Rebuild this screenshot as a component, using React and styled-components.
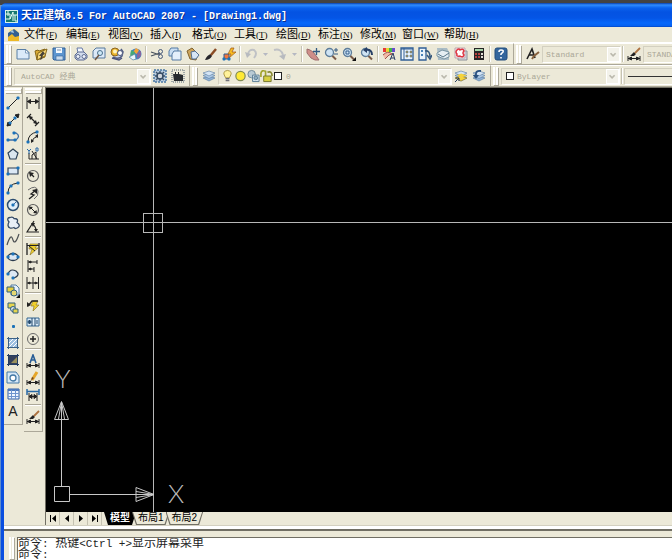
import React, { useState } from 'react'
import styled, { createGlobalStyle } from 'styled-components'

const GlobalStyle = createGlobalStyle`
* {
  box-sizing: border-box;
}

body {
  background: #434343;
  margin: 0;
}

button, input, select {
  background: none;
  border: none;
  border-radius: 0;
  color: inherit;
  font: inherit;
  margin: 0;
  outline: none;
  padding: 0;
}
`

const Desktop = styled.div`
background: linear-gradient(#434343 0 5px, #6d97c8 5px 30px, #5f8ccc 30px);
display: flex;
font-family: 'Liberation Mono', 'Noto Sans CJK SC', monospace;
height: 100vh;
overflow: hidden;
padding: 3px 0 0 1px;
`

const Window = styled.div`
background: #ece9d8;
border-left: 3px solid #0a4fe0;
border-top-left-radius: 6px;
display: flex;
flex: 1;
flex-direction: column;
min-width: 0;
`

const TitleBar = styled.header`
align-items: center;
background: linear-gradient(#0a3fa8, #2f8cff 2px, #0a62ee 5px, #0453e2 9px, #0455e6 15px, #0768fb 20px, #0560f0 23px, #0340b8);
border-top-left-radius: 5px;
color: #ffffff;
display: flex;
flex: none;
font-size: 11px;
font-weight: 700;
gap: 3px;
height: 24px;
line-height: 24px;
margin-left: -3px;
padding: 2px 0 0 4px;
text-shadow: 1px 1px #0b2f8c;

& > h1 {
  font-size: 11px;
  margin: 0;
  white-space: pre;
}
`

const Latin = styled.span`
font-size: ${props => props.$size}px;
`

const MenuBar = styled.nav`
align-items: center;
border-bottom: 1px solid #ffffff;
display: flex;
flex: none;
height: 16px;
padding-left: 3px;

& > svg {
  flex: none;
  margin-right: 3px;
}
`

const MenuItem = styled.button`
flex: none;
font-family: 'Liberation Serif', 'Noto Sans CJK SC', serif;
font-size: 11px;
line-height: 14px;
text-align: left;
white-space: nowrap;
width: 42px;

& > span {
  font-size: 9px;
}
`

const ToolRow = styled.div`
display: flex;
flex: none;
height: 22px;
overflow: hidden;
`

const ToolBar = styled.div`
align-items: center;
border-bottom: 1px solid #aca899;
border-right: 1px solid #aca899;
border-top: 1px solid #ffffff;
display: flex;
flex: ${props => props.$grow ? '1 0 auto' : 'none'};
padding: 0 ${props => props.$end || 2}px 0 2px;
`

const Grip = styled.span`
border: solid #ffffff;
box-shadow: 1px 1px #aca899;
flex: none;
${props => props.$flat ? `
border-width: 2px 0;
height: 5px;
margin: 0 1px 1px;
` : `
border-width: 0 2px;
height: 18px;
margin: 0 3px 0 0;
width: 5px;
`}
`

const ToolButton = styled.button`
align-items: center;
display: flex;
flex: none;
height: ${props => props.$tall ? 17 : 20}px;
justify-content: center;
width: 18px;
`

const FlyoutButton = styled(ToolButton)`
width: 11px;
`

const LayerButton = styled(ToolButton)`
width: 13px;
`

const LetterButton = styled(ToolButton)`
color: #222222;
font-family: 'Liberation Sans', sans-serif;
font-size: 14px;
`

const Divider = styled.span`
align-self: stretch;
flex: none;
${props => props.$flat ? `
border-top: 1px solid #aca899;
box-shadow: inset 0 1px #ffffff;
height: 3px;
margin: 1px 1px;
` : `
border-left: 1px solid #c5c2b2;
box-shadow: inset 1px 0 #ffffff;
margin: 2px 1px;
width: 2px;
`}
`

const Combo = styled.div`
align-items: center;
border: 1px solid;
border-color: #d3d0c0 #ffffff #ffffff #d3d0c0;
color: #aaa797;
display: flex;
flex: none;
font-size: 8px;
height: 17px;
padding-left: ${props => props.$pad || 3}px;
width: ${props => props.$width}px;

& > select {
  appearance: none;
  flex: 1;
  height: 15px;
  line-height: 15px;
  min-width: 0;
}

& > svg {
  background: #f3f2ea;
  border: 1px solid #ffffff;
  flex: none;
}
`

const Swatch = styled.span`
background: #ffffff;
border: 1px solid #222222;
flex: none;
height: 8px;
margin: 0 ${props => props.$gap}px 0 1px;
width: 8px;
`

const LinePreview = styled.span`
border-top: 1px solid #333333;
flex: 1;
`

const Work = styled.main`
display: flex;
flex: 1;
min-height: 0;
`

const SideBar = styled.div`
align-self: flex-start;
border-bottom: 1px solid #aca899;
border-right: 1px solid #aca899;
display: flex;
flex: none;
flex-direction: column;
margin-right: 1px;
padding: 1px 0 ${props => props.$end}px;
width: 19px;

& > div {
  align-items: center;
  display: flex;
  flex-direction: column;
  justify-content: space-between;
  min-height: ${props => props.$length || 0}px;
}
`

const Drawing = styled.section`
border-left: 1px solid #716f64;
border-top: 1px solid #716f64;
display: flex;
flex: 1;
flex-direction: column;
margin-left: 1px;
min-width: 0;
`

const Canvas = styled.div`
background: #000000;
flex: 1;
min-height: 0;
overflow: hidden;
position: relative;

& > svg {
  left: 0;
  position: absolute;
}
`

const CrossHair = styled.svg`
height: 100%;
top: 0;
width: 100%;
`

const UcsIcon = styled.svg`
bottom: 0;
font-family: Lato, sans-serif;
font-size: 26px;
font-weight: 300;
`

const TabRow = styled.div`
align-items: stretch;
display: flex;
flex: none;
height: 13px;
`

const NavButton = styled.button`
align-items: center;
border-right: 1px solid #c5c2b2;
display: flex;
justify-content: center;
width: 14px;
`

const Tabs = styled.div`
display: flex;
padding-left: 2px;
`

const Tab = styled.button`
background: ${props => props.$active ? '#000000' : '#716f64'};
clip-path: polygon(0 0, 100% 0, calc(100% - 4px) 100%, 4px 100%);
color: ${props => props.$active ? '#ffffff' : '#000000'};
font-size: 10px;
font-weight: ${props => props.$active ? 700 : 400};
line-height: 12px;
margin-right: -4px;
padding: 0 1px 1px;

& > span {
  background: ${props => props.$active ? '#000000' : '#ece9d8'};
  clip-path: polygon(0 0, 100% 0, calc(100% - 4px) 100%, 4px 100%);
  display: block;
  font-family: 'Liberation Sans', 'Noto Sans CJK SC', sans-serif;
  height: 12px;
  padding: 0 5px;
  white-space: nowrap;
}
`

const CommandArea = styled.footer`
border-top: 2px solid #716f64;
box-shadow: 0 -3px #ffffff, 0 -4px #d3d0c0;
display: flex;
flex: none;
margin-top: 4px;
padding: 6px 0 0 5px;

& > span {
  height: 22px;
  margin-right: 3px;
}
`

const CommandLog = styled.div`
background: #ffffff;
border-left: 1px solid #716f64;
border-top: 1px solid #716f64;
color: #222222;
flex: 1;
font-size: 12px;
line-height: 11px;
overflow: hidden;
padding-top: 1px;
white-space: pre;

& > p {
  height: 11px;
  margin: 0;
}

& > label {
  display: flex;
  height: 10px;
}

& input {
  flex: 1;
  height: 10px;
}
`

const blue = '#3c6ea5'
const ink = '#222222'

const layers = (
  <>
    <path d="M1 9l6-2 6 2-6 3z" fill="#8fb2d6" stroke="#55799f" strokeWidth=".6" />
    <path d="M1 6.500l6-2 6 2-6 3z" fill="#b2cde8" stroke="#55799f" strokeWidth=".6" />
    <path d="M1 4l6-2 6 2-6 3z" fill="#d3e4f5" stroke="#55799f" strokeWidth=".6" />
  </>
)

const magnifier = (
  <>
    <path d="M8 8.500l4 4" stroke="#7a5c49" strokeWidth="2" />
    <circle cx="5.500" cy="5.500" r="4" fill="#cfe4f4" stroke="#5d7d9a" strokeWidth="1.300" />
  </>
)

const dimLine = <path d="M1 9v5M13 9v5M1 11.500h12M1.500 11.500l3-1.500v3zM12.500 11.500l-3-1.500v3z" fill={ink} stroke={ink} />

const dots = points => points.map(([x, y]) => (
  <rect key={`${x}-${y}`} x={x - 1.5} y={y - 1.5} width="3" height="3" rx="1" fill="#1c72b8" />
))

const drawings = {
  // standard
  new: <><path d="M1 2.500h9l3 3V12H1z" fill="#dbeaf9" stroke="#587ea6" /><path d="M9.500 2.500v3.500H13z" fill="#ffffff" stroke="#587ea6" strokeWidth=".7" /></>,
  open: <><path d="M1 4l3-1 1 1 6-2v8l-8 3z" fill="#d9ab35" stroke="#856719" /><path d="M4 6l9-4-2 7-8 4z" fill="#f8d978" stroke="#856719" /><path d="M6 13l1-4-2 0 4-5 2 3-2 1-1 4z" fill="#46423b" /></>,
  save: <><path d="M1 1h12v12H2l-1-1z" fill="#5d96d0" stroke="#315f96" /><path d="M4 1h6v5H4z" fill="#f3f8fd" /><path d="M4 9h7v4H4z" fill="#c8dbed" stroke="#315f96" strokeWidth=".6" /><path d="M5 3h4" stroke="#7b91aa" /></>,
  print: <><path d="M3 1h5l2 5H4z" fill="#f4f8fe" stroke="#6779a6" /><path d="M1 8l3-3h6l3 3v3l-3 2H3l-2-2z" fill="#d2dced" stroke="#5d6b91" /><circle cx="4" cy="9.500" r="2" fill="#eef2fa" stroke="#5d6b91" /><circle cx="10" cy="9.500" r="2" fill="#eef2fa" stroke="#5d6b91" /></>,
  preview: <><path d="M1 4l3-3h9v10H1z" fill="#dce9f7" stroke="#57789c" /><circle cx="8" cy="6" r="2.500" fill="#cde8f7" stroke="#4c718d" /><path d="M7 8l-4 5" stroke="#6e5643" strokeWidth="1.500" /></>,
  publish: <><path d="M3 10q6 3 9-1l1-4-2-3" fill="#cbd4e8" stroke="#505c83" strokeWidth="1.500" /><circle cx="5" cy="5" r="4" fill="#e9b42b" stroke="#8c6420" /><circle cx="5" cy="4.500" r="2" fill="#fff3bf" /><circle cx="10" cy="6" r="2.500" fill="#ffffff" stroke="#515b80" /><path d="M2 11l7 2 3-2" fill="none" stroke="#49527c" strokeWidth="1.500" /></>,
  web: <><circle cx="8" cy="7" r="5.500" fill="#3f83c6" /><path d="M8 1l3 2-2 4-4-2z" fill="#f5a338" /><path d="M3 3l4 2-1 5-4 1z" fill="#47a978" /><path d="M9 6l4-2v5l-4 3z" fill="#85659e" /><path d="M1 10l6-3 1 5-3 1z" fill="#eaf6fc" stroke="#56829f" strokeWidth=".7" /></>,
  cut: <><path d="M1 5l9 3M1 9l9-3" stroke="#46505c" strokeWidth="1.300" /><circle cx="10.500" cy="4.500" r="2" fill="none" stroke="#46587a" /><circle cx="10.500" cy="9.500" r="2" fill="none" stroke="#46587a" /></>,
  copy: <><path d="M1 4l2-3h7v8H1z" fill="#cbdff2" stroke="#557ba4" /><path d="M4 7l2-3h7v9H4z" fill="#e5f0fb" stroke="#557ba4" /></>,
  paste: <><path d="M1 4l5-3 6 6-2 6-6-1z" fill="#cda45a" stroke="#82632e" /><path d="M5 5l4-1 4 4-3 4H6z" fill="#d7e6f5" stroke="#526f91" /></>,
  brush: <><path d="M1 13q2-5 6-6l1 2q-2 4-7 4z" fill="#26252a" /><path d="M7 8l5-6" stroke="#8b4c25" strokeWidth="2.500" /></>,
  block: <><path d="M2 7h5v5H2z" fill="#f3763b" stroke="#315b8e" /><path d="M6 7l3-6h3l-2 4h4L7 11l2-4z" fill="#f8bc21" stroke="#9d5515" strokeWidth=".7" />{dots([[2, 12], [7, 12]])}</>,
  undo: <><path d="M4 7q1-5 6-4 4 3 0 8" fill="none" stroke="#bfc1c5" strokeWidth="2" /><path d="M1 5l2 6 4-4z" fill="#b7babf" /></>,
  redo: <><path d="M1 3q7-2 9 5" fill="none" stroke="#bfc1c5" strokeWidth="2" /><path d="M13 7l-2 6-5-4z" fill="#b7babf" /></>,
  pan: <><path d="M1 2l3 1 3 2 4 5 2 3H9L5 11 1 6z" fill="#cf8e89" stroke="#9d6d6d" /><path d="M10.500 1v7M7 4.500h7" stroke="#345b82" strokeWidth="1.300" /></>,
  zoomRealtime: <>{magnifier}<path d="M10 3h4M12 1v4M10 7h4" stroke="#345b82" /></>,
  zoomWindow: <>{magnifier}<path d="M4 4h3v3H4z" fill="none" stroke="#355f8c" /><path d="M14 10v4h-4z" fill="#111111" /></>,
  zoomPrevious: <>{magnifier}<path d="M12 8q0-6-6-5" fill="none" stroke="#263f66" strokeWidth="2" /><path d="M7 0v6L3 3z" fill="#263f66" /></>,
  properties: <><path d="M1 1h3v4H1z" fill="#e83838" /><path d="M4 1h3v4H4z" fill="#e9d735" /><path d="M7 1h3v4H7z" fill="#40b549" /><path d="M10 1h3v4h-3z" fill="#684bcc" /><path d="M1 8q5-5 9-1l-3 1-4 4" fill="#f0b9a5" stroke="#9c564d" /><path d="M8 13l3-7 2 7M9 11h3" fill="none" stroke="#263a61" /></>,
  designCenter: <><path d="M1 1h12v12H1z" fill="#eef5fb" stroke="#315f96" strokeWidth="1.300" /><path d="M4 1v12M1 2h12" stroke="#315f96" /><path d="M6 4h2v2H6zM10 4h2v2h-2zM6 8h2v2H6zM10 8h2v2h-2z" fill="#ca9e3c" stroke="#47719b" strokeWidth=".6" /></>,
  palettes: <><path d="M1 1h7v12H1z" fill="#eaf3fb" stroke="#315f96" strokeWidth="1.300" /><path d="M3 3h2v2H3zM3 7h2v2H3z" fill="#4882b8" /><path d="M7 4q5-1 5 6M9 8l3 4 2-4" fill="none" stroke="#375a7e" strokeWidth="1.500" /></>,
  sheets: <><path d="M1 1h10l2 4v8H2z" fill="#aabcc5" /><path d="M1 6l5-3 7 2v5l-5 2-7-3z" fill="#e5eef2" stroke="#7894a2" /><path d="M2 7l5 3 6-4" fill="none" stroke="#587789" /></>,
  markup: <><path d="M4 4h9v9H4z" fill="#d5dbe2" stroke="#8a8f97" /><path d="M1 1h10v10H1z" fill="#f6ebed" stroke="#bda6af" /><path d="M3 3q2-2 3 0 3-2 4 1-2 2 0 4-1 3-4 1-4 1-3-2-2-2 0-4z" fill="#ffffff" stroke="#df3542" strokeWidth="1.500" /></>,
  calculator: <><path d="M2 1h10v12H2z" fill="#262626" /><path d="M3 2h8v2H3z" fill="#a9d5aa" /><path d="M3 6h2v2H3zM6 6h2v2H6zM3 9h2v2H3zM6 9h2v2H6z" fill="#b7423f" /><path d="M9 6h2v2H9zM9 9h2v2H9z" fill="#e2dfd8" /></>,
  help: <><rect x="1" y="1" width="12" height="12" rx="2" fill="#34669d" stroke="#234d7c" /><path d="M5 5q0-2 2-2 3 0 2 2L7 7v1M7 10v1.500" fill="none" stroke="#ffffff" strokeWidth="1.600" /></>,
  textStyle: <><path d="M1 12L6 2l3 9M3 8h5" fill="none" stroke={ink} strokeWidth="1.600" /><path d="M6 12l2-3 5-4" fill="none" stroke="#88623f" strokeWidth="2" /></>,
  dimStyle: <>{dimLine}<path d="M3 9l4-4 2 2-2 2z" fill={ink} /><path d="M8 6l5-5" stroke="#ad7240" strokeWidth="1.800" /></>,
  gear: <><path d="M1 1h12v12H1z" fill="#b9cde0" stroke="#4a77a3" strokeWidth="1.500" strokeDasharray="2 1" /><circle cx="7" cy="7" r="3" fill="#d1d6dc" stroke="#374d65" strokeWidth="1.500" /><path d="M7 2v3M7 9v3M2 7h3M9 7h3M3 3l2 2M11 3L9 5M3 11l2-2M11 11L9 9" stroke="#374d65" strokeWidth="1.300" /></>,
  workspace: <><path d="M1 1h12v12H1z" fill="none" stroke="#526474" strokeDasharray="1 1" /><path d="M2 5h2V3h1v2h2V3h1v2l4 1v6H3z" fill="#26292d" /></>,
  layers,
  bulb: <><path d="M7 1q-6 1-3 6l1 2h4l1-2Q13 2 7 1z" fill="#fff29a" stroke="#a99440" /><path d="M5 10h4M5 12h4" stroke="#6f7079" strokeWidth="1.500" /></>,
  sun: <circle cx="7" cy="7" r="5" fill="#ffea35" stroke="#808b55" strokeWidth="1.300" />,
  freeze: <><circle cx="5" cy="5" r="4" fill="#b9cad4" stroke="#6e8797" /><path d="M6 6h7v7H6z" fill="#d5e4ed" stroke="#587b93" /><circle cx="9.500" cy="9" r="2" fill="#91adbf" stroke="#587b93" /></>,
  lock: <><path d="M1 8V4q1-4 5-2v5" fill="none" stroke="#a2a42f" strokeWidth="1.800" /><path d="M4 7h8v6H4z" fill="#d6cf40" stroke="#74752a" /><path d="M8 3q5-2 5 4" fill="none" stroke="#858731" strokeWidth="1.800" /></>,
  layerCurrent: <>{layers}<path d="M1 9l6-2 6 2-6 3z" fill="#f5d33c" stroke="#977b2a" strokeWidth=".6" /><path d="M3 6.500l4-2 6 2-6 2z" fill="#f5d33c" /><path d="M1 13l4-4M2 9h3v3" fill="none" stroke="#263d60" /></>,
  layerPrevious: <>{layers}<path d="M4 7q-1-6 5-5" fill="none" stroke="#2b527f" strokeWidth="1.800" /><path d="M1 6h6l-3 4z" fill="#2b527f" /></>,

  // draw
  line: <><path d="M2 12L12 2" stroke={ink} />{dots([[2, 12], [12, 2]])}</>,
  xline: <><path d="M1 13L13 1M13 1l-1 4-3-3zM1 13l1-4 3 3z" fill={ink} stroke={ink} />{dots([[4, 10], [9, 5]])}</>,
  pline: <><path d="M2 10h8q5-4 0-7H7" fill="none" stroke={blue} strokeWidth="1.300" />{dots([[2, 10], [9, 10], [8, 3]])}</>,
  polygon: <path d="M7 2l5 4-2 6H4L2 6z" fill="#dae6ef" stroke="#2c4258" strokeWidth="1.200" />,
  rectangle: <><path d="M2 4h10v6H2z" fill="#dce8f5" stroke="#2d3f55" strokeWidth="1.200" />{dots([[2, 10], [12, 4]])}</>,
  arc: <><path d="M2 12Q2 3 12 2" fill="none" stroke={ink} />{dots([[2, 12], [5, 5], [12, 2]])}</>,
  circle: <><circle cx="7" cy="7" r="5.500" fill="#e1eef9" stroke="#2b4c6f" strokeWidth="1.500" /><path d="M7 7l3-3" stroke={blue} />{dots([[7, 7]])}</>,
  cloud: <path d="M3 6Q0 2 4 1.500q3-1 4 1 5 0 3 4 4 3 1 5-3 2-4 0-5 2-6-2 0-2 1-3.500z" fill="#e8eff6" stroke="#354a65" strokeWidth="1.300" />,
  spline: <path d="M1 12Q5-1 7 7q2 6 6-6" fill="none" stroke="#4d5154" strokeWidth="1.200" />,
  ellipse: <><ellipse cx="7" cy="7" rx="5" ry="3.500" fill="#dce8f4" stroke="#29394b" strokeWidth="1.300" />{dots([[2, 7], [12, 7], [7, 4]])}</>,
  ellipseArc: <><path d="M2 7q2-6 8-3 5 4-2 7" fill="#dce8f4" stroke="#29394b" strokeWidth="1.200" />{dots([[2, 7], [7, 11]])}</>,
  insert: <><path d="M5 1h5l3 3v7H5z" fill="#e7f1fb" stroke="#537aa1" /><path d="M1 3h7v5H1z" fill="#e6ce3e" stroke="#315f7d" /><circle cx="8" cy="9" r="3" fill="#e5d872" stroke="#315f7d" /><path d="M14 10v4h-4z" fill="#111111" /></>,
  makeBlock: <><path d="M2 2h7v5H2z" fill="#e6d54e" stroke="#315f7d" /><circle cx="7" cy="8" r="2.500" fill="#d9e6ef" stroke="#315f7d" /><path d="M7 8h5v4H7z" fill="#e6d54e" stroke="#315f7d" /></>,
  point: <rect x="6" y="6" width="3" height="3" rx="1" fill="#1c72b8" />,
  hatch: <><path d="M3 3h8v8H3z" fill="#9fc0e1" /><path d="M3 7l4-4M3 11l8-8M7 11l4-4" stroke="#ffffff" /><path d="M2.500 1v12M11.500 1v12M1 2.500h12M1 11.500h12" stroke="#3c6186" /></>,
  gradient: <><path d="M2 2h10v9H2z" fill="#35415b" /><path d="M5 10l7-7v7z" fill="#9b925d" /><path d="M2.500 1v12M11.500 1v12M1 2.500h12M1 11.500h12" stroke="#253e62" /></>,
  region: <><path d="M1 2h9l3 4v7H1z" fill="#d6e8f7" stroke="#4379a5" /><circle cx="7" cy="8" r="3" fill="#ffffff" stroke="#4379a5" strokeWidth="1.300" /></>,
  table: <><path d="M2 2h11v10H2z" fill="#eff5ff" stroke="#315fa6" /><path d="M2 2h11v2H2z" fill="#4b79bd" /><path d="M2 6.500h11M2 9.500h11M5.500 3v9M9.500 3v9" stroke="#6e94ce" /></>,

  // dimension
  dimLinear: <path d="M1 1v12M13 1v12M1 5.500h12M1.500 5.500l3-2v4zM12.500 5.500l-3-2v4z" fill={ink} stroke={ink} />,
  dimAligned: <><path d="M1 5l4-4M9 13l4-4M3 3l8 8" stroke={ink} strokeWidth="1.200" /><path d="M3 3l4 1-3 3zM11 11l-4-1 3-3z" fill={ink} /></>,
  dimArc: <><path d="M2 12Q2 3 12 2M6 12q0-4 6-6" fill="none" stroke={ink} /><path d="M5 13V9l3 2zM12 4v4L9 6z" fill={ink} />{dots([[2, 12], [11, 2]])}</>,
  dimOrdinate: <><path d="M3 6v6h10M6 12V8l4-3M10 5v7M6 4l5 8" fill="none" stroke={ink} /><path d="M1 2l2 2 2-2M3 4v3M10 1h2v3h-2z" fill="none" stroke="#2869a5" /></>,
  dimRadius: <><circle cx="7" cy="7" r="5.500" fill="none" stroke="#5b5b5b" strokeWidth="1.200" /><path d="M8 8L4 4" stroke={ink} strokeWidth="1.300" /><path d="M3 3l5 1-4 4z" fill={ink} /></>,
  dimJogged: <><path d="M2 4q8-6 10 1 1 5-4 8" fill="none" stroke="#6a6a6a" /><path d="M3 13l5-4-3-1 5-4" fill="none" stroke={ink} strokeWidth="1.300" /><path d="M11 3v5L6 4z" fill={ink} /></>,
  dimDiameter: <><circle cx="7" cy="7" r="5.500" fill="none" stroke="#5b5b5b" strokeWidth="1.200" /><path d="M4 4l6 6" stroke={ink} /><path d="M3 3.500l4 .5-3.500 3zM11 10.500l-4-.5 3.500-3z" fill={ink} /></>,
  dimAngular: <><path d="M8 1L1 12h12M6 4q4 2 4 7" fill="none" stroke={ink} strokeWidth="1.200" /><path d="M5 3l4 0-2 4zM8 9h4l-2 3z" fill={ink} /></>,
  dimQuick: <><path d="M4 2h8L9 6h3l-8 7 2-6H3z" fill="#f0cf2d" stroke="#856e20" strokeWidth=".6" /><path d="M1 1v12M13 1v12" stroke={ink} strokeWidth="1.300" /><path d="M1 3.500h12M3 4l6 5" stroke={ink} /></>,
  dimBaseline: <path d="M2 1v12M11 1v4M8 8v5M2 3h9M2 10h6M3 3l2-1v2zM3 10l2-1v2z" fill={ink} stroke={ink} />,
  dimContinue: <path d="M1 1v12M7 1v12M12.500 1v12M1 7h12M2 7l2-1v2zM11 7l-2-1v2z" fill={ink} stroke={ink} />,
  leader: <><path d="M7 3h5l-2 4h3l-6 6 1-5H5z" fill="#f0cf2d" stroke="#856e20" strokeWidth=".6" /><path d="M2 8l4-5h6" fill="none" stroke={ink} strokeWidth="1.300" /><path d="M1 9V4l4 3z" fill={ink} /></>,
  tolerance: <><path d="M1 3h12v8H1z" fill="#dcecf8" stroke="#326591" /><path d="M6 3v8M9 3v8M2 7h3M3.500 5v4M11 5v4" stroke="#23496d" /><circle cx="3.500" cy="7" r="1.500" fill="none" stroke="#23496d" /></>,
  center: <><circle cx="7" cy="7" r="5.500" fill="none" stroke="#6a6a6a" /><path d="M4 7h6M7 4v6" stroke={ink} strokeWidth="1.500" /></>,
  dimEdit: <>{dimLine}<path d="M4 9l3-8 3 8M5 6h4" fill="none" stroke="#285d95" strokeWidth="1.600" /></>,
  dimTextEdit: <>{dimLine}<path d="M6 9l5-8" stroke="#e6a629" strokeWidth="3" /><path d="M5 10l1-4 2 1z" fill="#6d432c" /></>,
  dimUpdate: <><path d="M1 1v6M13 1v6M1 3.500h12" stroke="#2869a5" strokeWidth="1.500" /><path d="M3 5v8M11 5v8M3 8.500h8M3 8.500l3-2v4zM11 8.500l-3-2v4z" fill={ink} stroke={ink} /></>,
}

const Icon = ({ name }) => (
  <svg width="14" height="14" viewBox="0 0 14 14" fill="none" aria-hidden="true">{drawings[name]}</svg>
)

const Tools = ({ items, flat }) => items.map((item, index) => {
  if (item === '|') return <Divider key={index} $flat={flat} />
  if (item === 'v') return (
    <FlyoutButton key={index} aria-label="more">
      <svg width="5" height="3"><path d="M0 0h5L2.500 3z" fill="#b5b8c2" /></svg>
    </FlyoutButton>
  )
  if (item === 'mtext') return <LetterButton key={index} $tall aria-label="mtext">A</LetterButton>
  return <ToolButton key={index} $tall={flat} aria-label={item}><Icon name={item} /></ToolButton>
})

const Arrow = () => (
  <svg width="13" height="15" viewBox="0 0 13 15" aria-hidden="true">
    <path d="M3 6l3 3 3-3" fill="none" stroke="#bbb9ad" strokeWidth="2" />
  </svg>
)

const menus = [
  ['文件', 'F'], ['编辑', 'E'], ['视图', 'V'], ['插入', 'I'], ['格式', 'O'], ['工具', 'T'],
  ['绘图', 'D'], ['标注', 'N'], ['修改', 'M'], ['窗口', 'W'], ['帮助', 'H'],
]

const standardTools = [
  'new', 'open', 'save', '|', 'print', 'preview', 'publish', 'web', '|',
  'cut', 'copy', 'paste', 'brush', 'block', '|', 'undo', 'v', 'redo', 'v', '|',
  'pan', 'zoomRealtime', 'zoomWindow', 'zoomPrevious', '|',
  'properties', 'designCenter', 'palettes', 'sheets', 'markup', 'calculator', '|', 'help',
]

const drawTools = [
  'line', 'xline', 'pline', 'polygon', 'rectangle', 'arc', 'circle', 'cloud', 'spline', 'ellipse',
  'ellipseArc', 'insert', 'makeBlock', 'point', 'hatch', 'gradient', 'region', 'table', 'mtext',
]

const dimensionTools = [
  'dimLinear', 'dimAligned', 'dimArc', 'dimOrdinate', '|',
  'dimRadius', 'dimJogged', 'dimDiameter', 'dimAngular', '|',
  'dimQuick', 'dimBaseline', 'dimContinue', '|',
  'leader', 'tolerance', 'center', '|',
  'dimEdit', 'dimTextEdit', 'dimUpdate', '|', 'dimStyle',
]

const navArrows = [
  ['first', 'M1 0h1v7H1zM7 0v7L3 3.500z'],
  ['previous', 'M6 0v7L2 3.500z'],
  ['next', 'M2 0v7l4-3.500z'],
  ['last', 'M1 0v7l4-3.500zM6 0h1v7H6z'],
]

const App = () => {

  const [tab, setTab] = useState('模型')
  const [command, setCommand] = useState('')

  return (
    <Desktop>
      <GlobalStyle />
      <Window>
        <TitleBar>
          <svg width="13" height="13" viewBox="0 0 13 13" aria-hidden="true">
            <path d="M0 0h13v13H0z" fill="#d7f0e9" />
            <path d="M1 1h11v11H1z" fill="#16796f" />
            <path d="M1 4h4v5H1M3 1v5M5 9l3-7v9M8 5h4M10 5v6h2" fill="none" stroke="#e9fff7" />
          </svg>
          <h1>天正建筑<Latin $size={10}>8.5 For AutoCAD 2007 - [Drawing1.dwg]</Latin></h1>
        </TitleBar>
        <MenuBar>
          <svg width="14" height="14" viewBox="0 0 14 14" aria-hidden="true">
            <path d="M2 1h7l3 3v9H2z" fill="#f7e6a0" />
            <path d="M1 5l6-4 5 4v4H1z" fill="#335f91" />
            <path d="M1 9l4-3 3 3 4-1v5H1z" fill="#edb927" />
            <path d="M3 4l3-2 1 3z" fill="#a8c8e0" />
          </svg>
          {menus.map(([label, letter]) => (
            <MenuItem key={letter}>{label}<span>(<u>{letter}</u>)</span></MenuItem>
          ))}
        </MenuBar>
        <ToolRow>
          <ToolBar $end={3}>
            <Grip />
            <Tools items={standardTools} />
          </ToolBar>
          <ToolBar $grow>
            <Grip />
            <Tools items={['textStyle']} />
            <Combo $width={79}>
              <select aria-label="text style"><option>Standard</option></select>
              <Arrow />
            </Combo>
            <Divider />
            <Tools items={['dimStyle']} />
            <Combo $width={90}>
              <select aria-label="dimension style"><option>STANDARD</option></select>
              <Arrow />
            </Combo>
          </ToolBar>
        </ToolRow>
        <ToolRow>
          <ToolBar>
            <Grip />
            <Combo $width={137} $pad={6}>
              <select aria-label="workspace"><option>AutoCAD 经典</option></select>
              <Arrow />
            </Combo>
            <Tools items={['gear', 'workspace']} />
          </ToolBar>
          <ToolBar>
            <Grip />
            <Tools items={['layers']} />
            <Combo $width={234} $pad={2}>
              {['bulb', 'sun', 'freeze', 'lock'].map(name => (
                <LayerButton key={name} aria-label={name}><Icon name={name} /></LayerButton>
              ))}
              <Swatch $gap={4} />
              <select aria-label="layer"><option>0</option></select>
              <Arrow />
            </Combo>
            <Tools items={['layerCurrent', 'layerPrevious']} />
          </ToolBar>
          <ToolBar $grow>
            <Grip />
            <Combo $width={119}>
              <Swatch $gap={3} />
              <select aria-label="color"><option>ByLayer</option></select>
              <Arrow />
            </Combo>
            <Divider />
            <Combo $width={90}>
              <LinePreview />
              <Arrow />
            </Combo>
          </ToolBar>
        </ToolRow>
        <Work>
          <SideBar $length={326} $end={4}>
            <Grip $flat />
            <div><Tools items={drawTools} flat /></div>
          </SideBar>
          <SideBar $end={6}>
            <Grip $flat />
            <div><Tools items={dimensionTools} flat /></div>
          </SideBar>
          <Drawing>
            <Canvas>
              <CrossHair stroke="#b8b8b8" fill="none" shapeRendering="crispEdges">
                <path d="M107 0v2000M0 134h4000M97 125h19v19H97z" />
              </CrossHair>
              <UcsIcon width="150" height="150" fill="none" stroke="#c8c8c8">
                <path d="M8.500 124.500h15v15h-15zM15.500 124V57M24 132.500h66" />
                <path d="M15.500 39.500l-7 18h14zM15.500 40l-3 17M15.500 40l3 17M15.500 40v17" />
                <path d="M108 132.500l-18-7v14zM108 132.500l-18-3M108 132.500l-18 3M108 132.500H90" />
                <text x="9" y="26" fill="#b8b8b8" stroke="none">Y</text>
                <text x="122" y="141" fill="#b8b8b8" stroke="none">X</text>
              </UcsIcon>
            </Canvas>
            <TabRow>
              {navArrows.map(([name, d]) => (
                <NavButton key={name} aria-label={name}>
                  <svg width="8" height="7"><path d={d} fill="#000000" /></svg>
                </NavButton>
              ))}
              <Tabs>
                {['模型', '布局1', '布局2'].map(name => (
                  <Tab key={name} $active={name === tab} onClick={() => setTab(name)}><span>{name}</span></Tab>
                ))}
              </Tabs>
            </TabRow>
          </Drawing>
        </Work>
        <CommandArea>
          <Grip />
          <CommandLog>
            <p>命令<Latin $size={11}>: </Latin>热键<Latin $size={11}>&lt;Ctrl +&gt;</Latin>显示屏幕菜单</p>
            <label>
              命令<Latin $size={11}>: </Latin>
              <input type="text" value={command} onChange={e => setCommand(e.target.value)} />
            </label>
          </CommandLog>
        </CommandArea>
      </Window>
    </Desktop>
  )
}

export default App
